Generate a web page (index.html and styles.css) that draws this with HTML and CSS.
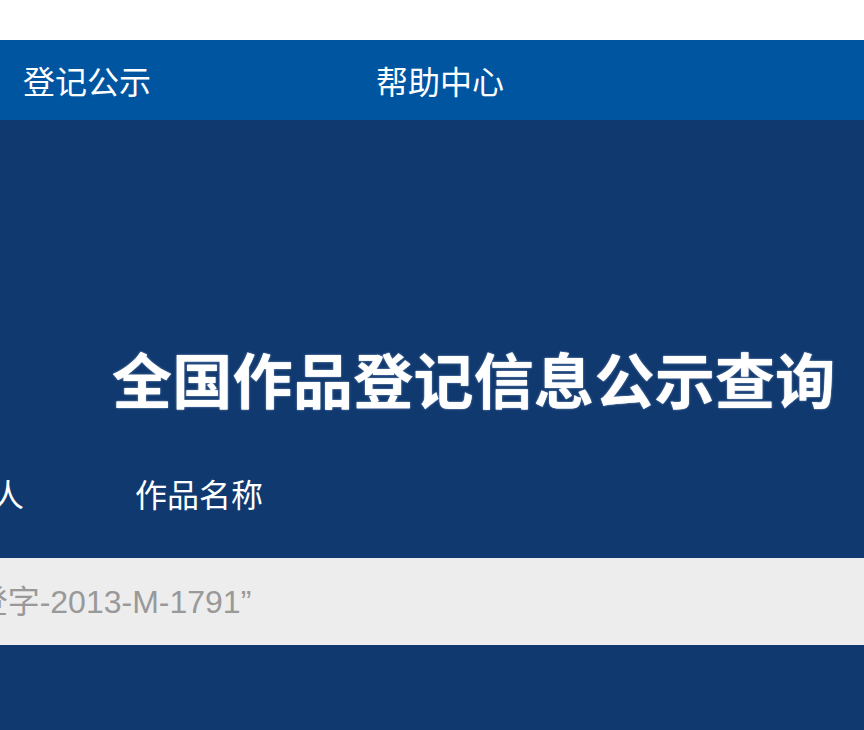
FILE: index.html
```html
<!DOCTYPE html>
<html lang="zh-CN">
<head>
<meta charset="utf-8">
<title>全国作品登记信息公示查询</title>
<link rel="stylesheet" href="styles.css">
</head>
<body>
<div class="topbar"></div>
<nav class="nav">
  <ul class="nav-list">
    <li class="nav-item">登记公示</li>
    <li class="nav-item">帮助中心</li>
  </ul>
</nav>
<section class="hero">
  <h1 class="hero-title">全国作品登记信息公示查询</h1>
  <div class="tabs">
    <span class="tab">著作权人</span>
    <span class="tab">作品名称</span>
  </div>
  <div class="search">
    <span class="search-placeholder">如“国作登字-2013-M-1791”</span>
  </div>
</section>
</body>
</html>
```

FILE: styles.css
```css
html, body {
  margin: 0;
  padding: 0;
  overflow: hidden;
}
body {
  width: 864px;
  height: 730px;
  background: #ffffff;
  font-family: "Liberation Sans", "Noto Sans CJK SC", sans-serif;
}
.topbar {
  height: 40px;
  background: #ffffff;
}
.nav {
  height: 80px;
  background: #0055a1;
}
.nav-list {
  list-style: none;
  margin: 0;
  padding: 0 0 0 23px;
  display: flex;
  gap: 225px;
  height: 80px;
  align-items: center;
}
.nav-item {
  color: #ffffff;
  font-family: "Noto Sans CJK SC", sans-serif;
  font-size: 32px;
  line-height: 80px;
  white-space: nowrap;
}
.hero {
  height: 610px;
  background: #10396f;
  padding-top: 228px;
  box-sizing: border-box;
  overflow: hidden;
}
.hero-title {
  margin: 0;
  padding-left: 112px;
  font-family: "Noto Sans CJK SC", sans-serif;
  font-weight: 700;
  font-size: 60px;
  line-height: 60px;
  color: #ffffff;
  white-space: nowrap;
  letter-spacing: 0.3px;
  text-shadow: 0 0 1px rgba(255,255,255,0.9), 0 0 3px rgba(200,220,255,0.35);
}
.tabs {
  display: flex;
  gap: 111px;
  margin-top: 60px;
  margin-left: -104px;
  height: 50px;
  align-items: center;
}
.tab {
  color: #ffffff;
  font-family: "Noto Sans CJK SC", sans-serif;
  font-size: 32px;
  line-height: 50px;
  white-space: nowrap;
}
.search {
  margin-top: 40px;
  height: 87px;
  box-sizing: border-box;
  padding-bottom: 5px;
  background: #ededed;
  display: flex;
  align-items: center;
  overflow: hidden;
}
.search-placeholder {
  margin-left: -131px;
  color: #999999;
  font-size: 32px;
  white-space: nowrap;
}
```
